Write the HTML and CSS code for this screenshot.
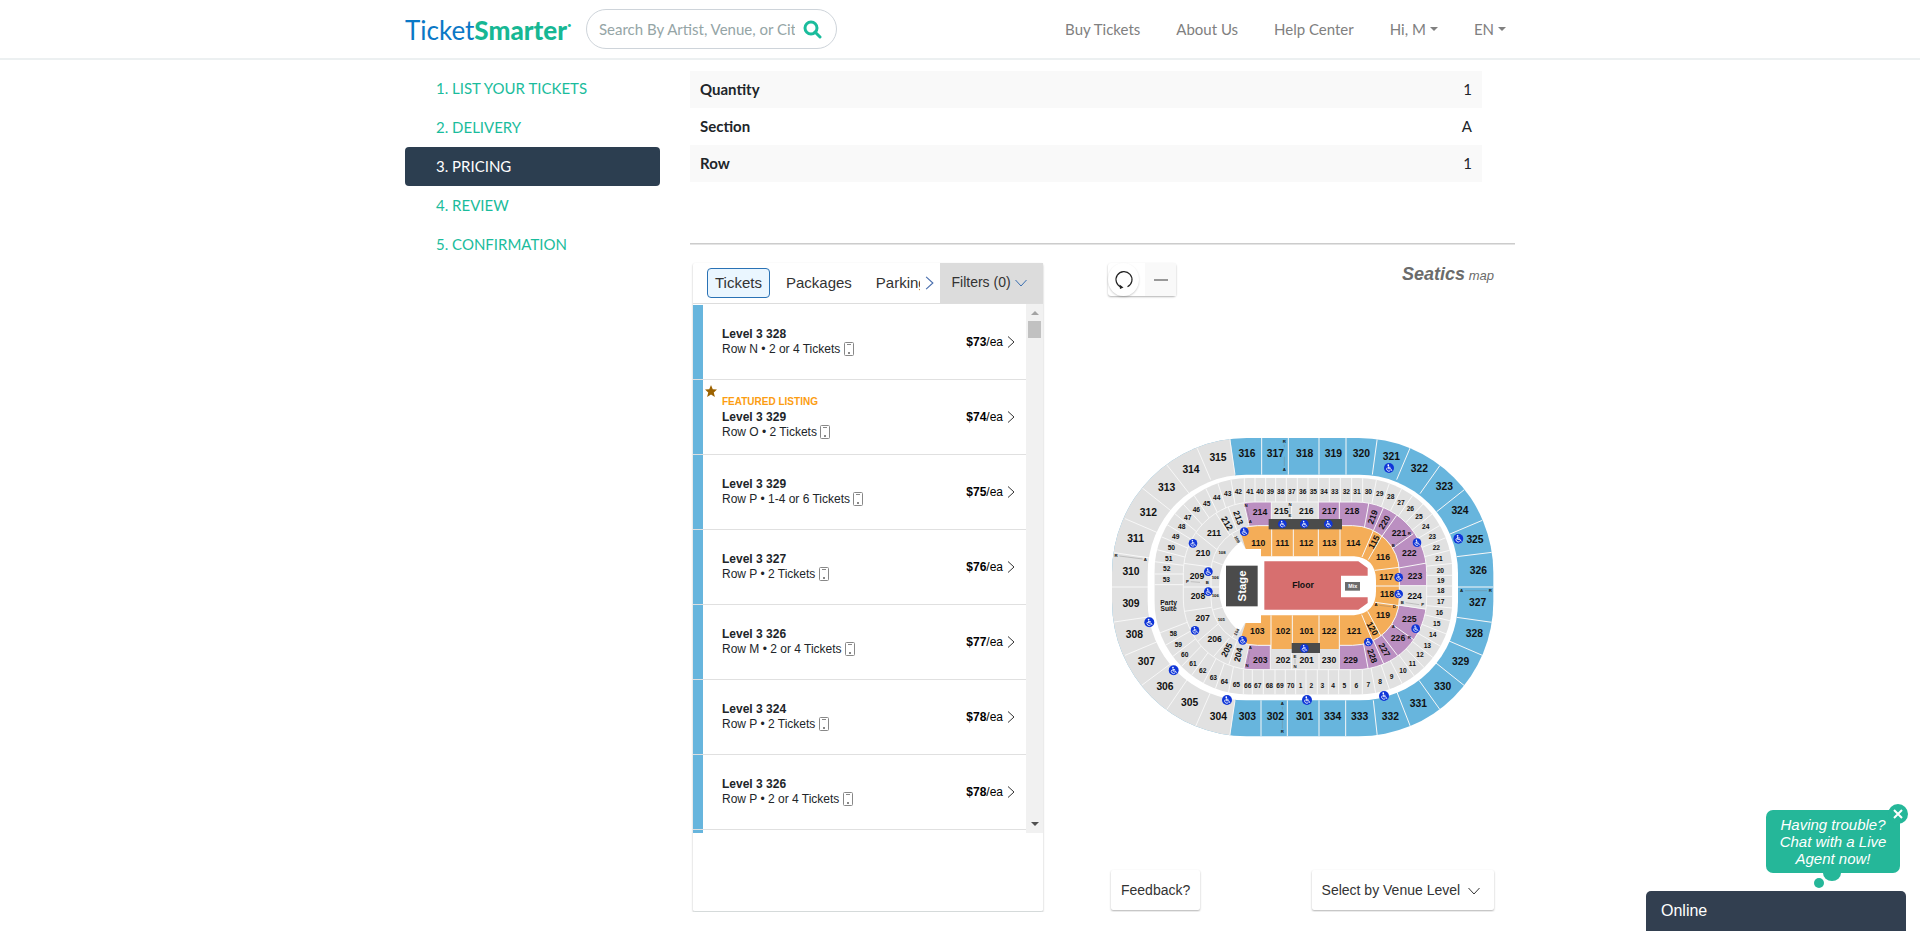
FILE: index.html
```html
<!DOCTYPE html>
<html lang="en">

<head>
  <meta charset="UTF-8" />
  <meta name="viewport" content="width=device-width, initial-scale=1.0" />
  <title>TicketSmarter</title>
  <link rel="stylesheet" href="styles.css">
</head>

<body>
  <svg class="sprite" width="0" height="0" aria-hidden="true">
    <symbol id="phone" viewBox="0 0 10 14">
      <rect x="0.5" y="0.5" width="9" height="13" rx="1" fill="none" stroke="#888" />
      <path d="M3 2.5h4" stroke="#888" />
      <rect x="4" y="10" width="2" height="2" fill="#888" />
    </symbol>
    <symbol id="chevron" viewBox="0 0 8 12">
      <path d="M1 0.5L7 6L1 11.5" fill="none" stroke="currentColor" />
    </symbol>
    <symbol id="chevron-down" viewBox="0 0 12 8">
      <path d="M0.5 1L6 7L11.5 1" fill="none" stroke="currentColor" />
    </symbol>
    <symbol id="wc" viewBox="-15 -15 30 30">
      <circle r="14" fill="#0f35d8" />
      <circle cx="-2" cy="-8" r="2.4" fill="#fff" />
      <path d="M-2-5V2H5L8 8M-2-2H4M-5-1A6 6 0 1 0 4 7" fill="none" stroke="#fff" stroke-width="2.4" />
    </symbol>
  </svg>

  <header class="site-header">
    <div class="container header-inner">
      <a href="#" class="logo"><span class="logo-ticket">Ticket</span><span class="logo-smarter">Smarter</span><span class="logo-reg">•</span></a>
      <form class="search">
        <input type="text" aria-label="Search" placeholder="Search By Artist, Venue, or City" />
        <button type="button" aria-label="Search">
          <svg width="19" height="19" viewBox="0 0 19 19"><circle cx="8" cy="8" r="6" fill="none" stroke="#1abc9c" stroke-width="3" /><path d="M12 12L17 17" stroke="#1abc9c" stroke-width="3" stroke-linecap="round" /></svg>
        </button>
      </form>
      <nav class="main-nav">
        <a href="#">Buy Tickets</a>
        <a href="#">About Us</a>
        <a href="#">Help Center</a>
        <a href="#" class="dropdown">Hi, M</a>
        <a href="#" class="dropdown">EN</a>
      </nav>
    </div>
  </header>

  <main class="container page">
    <nav class="steps">
      <a href="#">1. LIST YOUR TICKETS</a>
      <a href="#">2. DELIVERY</a>
      <a href="#" class="active">3. PRICING</a>
      <a href="#">4. REVIEW</a>
      <a href="#">5. CONFIRMATION</a>
    </nav>

    <section class="content">
      <table class="summary">
        <tr><th scope="row">Quantity</th><td>1</td></tr>
        <tr><th scope="row">Section</th><td>A</td></tr>
        <tr><th scope="row">Row</th><td>1</td></tr>
      </table>
      <hr />

      <div class="pricing">
        <div class="listings">
          <div class="listing-head">
            <div class="tabs">
              <button type="button" class="tab active">Tickets</button>
              <button type="button" class="tab">Packages</button>
              <button type="button" class="tab">Parking</button>
            </div>
            <button type="button" class="tabs-next" aria-label="More"><svg width="9" height="14"><use href="#chevron" /></svg></button>
            <button type="button" class="filters">Filters (0) <svg width="12" height="8"><use href="#chevron-down" /></svg></button>
          </div>

          <div class="listing-body">
            <ul class="listing-rows">
              <li>
                <div class="seat"><strong>Level 3 328</strong><span>Row N • 2 or 4 Tickets <svg width="10" height="14"><use href="#phone" /></svg></span></div>
                <div class="price"><span><b>$73</b>/ea</span><svg width="8" height="12"><use href="#chevron" /></svg></div>
              </li>
              <li>
                <svg class="star" width="12" height="12" viewBox="0 0 24 24"><path d="M12 0L15.5 8.5L24 9L17.5 15L19.8 24L12 19L4.2 24L6.5 15L0 9L8.5 8.5Z" fill="#9c6200" /></svg>
                <div class="seat"><em>FEATURED LISTING</em><strong>Level 3 329</strong><span>Row O • 2 Tickets <svg width="10" height="14"><use href="#phone" /></svg></span></div>
                <div class="price"><span><b>$74</b>/ea</span><svg width="8" height="12"><use href="#chevron" /></svg></div>
              </li>
              <li>
                <div class="seat"><strong>Level 3 329</strong><span>Row P • 1-4 or 6 Tickets <svg width="10" height="14"><use href="#phone" /></svg></span></div>
                <div class="price"><span><b>$75</b>/ea</span><svg width="8" height="12"><use href="#chevron" /></svg></div>
              </li>
              <li>
                <div class="seat"><strong>Level 3 327</strong><span>Row P • 2 Tickets <svg width="10" height="14"><use href="#phone" /></svg></span></div>
                <div class="price"><span><b>$76</b>/ea</span><svg width="8" height="12"><use href="#chevron" /></svg></div>
              </li>
              <li>
                <div class="seat"><strong>Level 3 326</strong><span>Row M • 2 or 4 Tickets <svg width="10" height="14"><use href="#phone" /></svg></span></div>
                <div class="price"><span><b>$77</b>/ea</span><svg width="8" height="12"><use href="#chevron" /></svg></div>
              </li>
              <li>
                <div class="seat"><strong>Level 3 324</strong><span>Row P • 2 Tickets <svg width="10" height="14"><use href="#phone" /></svg></span></div>
                <div class="price"><span><b>$78</b>/ea</span><svg width="8" height="12"><use href="#chevron" /></svg></div>
              </li>
              <li>
                <div class="seat"><strong>Level 3 326</strong><span>Row P • 2 or 4 Tickets <svg width="10" height="14"><use href="#phone" /></svg></span></div>
                <div class="price"><span><b>$78</b>/ea</span><svg width="8" height="12"><use href="#chevron" /></svg></div>
              </li>
              <li></li>
            </ul>
            <div class="scrollbar">
              <i class="arrow-up"></i>
              <i class="thumb"></i>
              <i class="arrow-down"></i>
            </div>
          </div>
        </div>

        <div class="map">
          <div class="map-top">
            <div class="zoom">
              <button type="button" class="reset" aria-label="Reset map">
                <svg width="20" height="20" viewBox="0 0 20 20"><path d="M13.5 16.8A8 8 0 1 0 7.5 17.2" fill="none" stroke="#222" stroke-width="1.2" /><path d="M5.5 14.5L9.5 17.5L6 19Z" fill="#222" /></svg>
              </button>
              <button type="button" class="minus" aria-label="Zoom out"><svg width="14" height="2"><rect width="14" height="2" fill="#999" /></svg></button>
            </div>
            <div class="seatics"><b>Seatics</b> map</div>
          </div>

          <svg class="arena" viewBox="24 13 1158 924" role="img" aria-label="Venue seating map">
            <defs>
              <clipPath id="c300"><rect x="36" y="40" width="1144" height="895" rx="404" /></clipPath>
              <clipPath id="cSuites"><rect x="163" y="160" width="894" height="650" rx="283" /></clipPath>
              <clipPath id="c200"><rect x="250" y="232" width="730" height="503" rx="212" /></clipPath>
              <clipPath id="c100"><rect x="333" y="303" width="565" height="359" rx="140" /></clipPath>
            </defs>

            <!-- 300 level -->
            <g clip-path="url(#c300)">
              <rect class="blue" x="30" y="30" width="1160" height="910" />
              <path class="grey" d="M30 30H389L405 150V827L389 940H30Z" />
              <path class="sep" d="M389 40L405 150M485 40V150M565 40V150M657 40V150M738 40V150M832 40L817 150M389 935L405 827M483 827V935M562 827V935M657 827V935M737 827V935M832 935L820 827M290 67L332 165M200 120L268 207M127 190L215 260M75 282L175 325M43 384L150 400M36 487H150M42 592L145 577M75 692L170 652M125 782L215 715M200 855L265 760M287 905L335 795M931 68L890 165M1020 122L960 207M1093 195L1010 261M1147 287L1050 328M1176 383L1070 396M1180 487H1070M1176 593L1070 578M1147 692L1045 648M1092 782L1008 715M1020 855L957 767M931 905L890 800" />
            </g>
            <rect class="white" x="143" y="150" width="931" height="677" rx="296" />

            <!-- suites -->
            <g clip-path="url(#cSuites)">
              <rect class="grey" x="163" y="160" width="894" height="650" />
              <path class="sep" d="M433 160V232M465 160V232M497 160V232M527 160V232M559 160V232M592 160V232M624 160V232M656 160V232M688 160V232M721 160V232M755 160V232M788 160V232M440 446L383 106M440 446L336 120M440 446L293 141M440 446L250 165M440 446L210 195M440 446L180 230M440 446L154 271M440 446L132 314M440 446L118 361M440 446L108 404M163 448H260M163 480H260M440 524L140 640M440 524L143 692M440 524L167 735M440 524L196 775M440 524L234 808M440 524L278 838M440 524L322 861M440 524L371 877M430 735V810M457 735V810M490 735V810M525 735V810M556 735V810M587 735V810M618 735V810M652 735V810M685 735V810M716 735V810M751 735V810M787 735V810M776 524L840 877M776 524L891 860M776 524L938 838M776 524L982 808M776 524L1018 776M776 524L1049 738M776 524L1076 696M776 524L1095 650M776 524L1109 602M776 524L1110 555M970 515H1060M970 484H1060M970 452H1060M776 446L1116 410M776 446L1108 362M776 446L1094 316M776 446L1071 272M776 446L1043 230M776 446L1011 193M776 446L973 162M776 446L933 137M776 446L888 118M776 446L840 109" />
            </g>

            <!-- 200 level -->
            <g clip-path="url(#c200)">
              <rect class="grey" x="250" y="232" width="730" height="503" />
              <path class="purple" d="M431 232H514V303H447ZM655 232H1000V483H700V303H655ZM880 541L990 556V740H718V600ZM447 662H511V735H431Z" />
              <path class="sep" d="M431 232L447 303M514 232V303M575 232V303M655 232V303M718 232V303M807 232L792 315M853 243L817 325M890 272L842 340M940 327L878 371M980 415L890 431M890 483H980M980 554L890 540M948 650L875 598M893 693L843 628M853 722L818 643M805 735L790 655M511 662V735M575 662V735M657 662V735M718 662V735M431 735L447 662M382 240L410 315M345 262L395 340M283 320L355 378M250 416L340 428M250 487H340M253 560L340 547M288 655L358 595M333 705L388 640M383 730L410 650" />
            </g>
            <rect class="frame" x="250" y="232" width="730" height="503" rx="212" />

            <!-- 100 level -->
            <g clip-path="url(#c100)">
              <rect class="grey" x="333" y="303" width="565" height="359" />
              <path class="orange" d="M416 303H900V662H416L437 595V373Z" />
              <path class="sep" d="M515 303V395M580 303V395M655 303V395M720 303V395M820 318L786 397M848 330L805 405M898 428L825 437M825 484H898M898 543L825 533M844 636L803 560M820 654L785 570M390 320L420 365M340 410L380 425M333 487H360M340 555L380 545M390 645L425 600" />
            </g>
            <rect class="frame" x="333" y="303" width="565" height="359" rx="140" />
            <rect class="orange" x="513" y="600" width="205" height="73" />
            <path class="sep" d="M513 572V673M577 572V673M657 572V673M718 572V673" />
            <path class="white" d="M483 395V373H437L424 350Q357 400 357 485Q357 570 420 622L435 595H483V572H762Q828 565 828 500V467Q828 400 762 395Z" />

            <rect class="dark" x="506" y="283" width="220" height="31" />
            <rect class="dark" x="575" y="655" width="85" height="30" />
            <rect class="dark" x="378" y="423" width="95" height="122" />
            <path class="red" d="M493 410H775L803 430V453H723V518H803V535L775 555H493Z" />
            <rect class="mix" x="735" y="472" width="45" height="26" />

            <g class="t300">
              <text x="354" y="98">315</text><text x="273" y="136">314</text><text x="200" y="189">313</text><text x="145" y="263">312</text><text x="107" y="343">311</text><text x="93" y="441">310</text>
              <text x="93" y="538">309</text><text x="103" y="630">308</text><text x="139" y="712">307</text><text x="195" y="785">306</text><text x="269" y="834">305</text><text x="355" y="875">304</text>
              <text x="442" y="875">303</text><text x="526" y="875">302</text><text x="614" y="875">301</text><text x="698" y="875">334</text><text x="779" y="875">333</text><text x="871" y="875">332</text>
              <text x="955" y="838">331</text><text x="1028" y="785">330</text><text x="1082" y="710">329</text><text x="1123" y="627">328</text><text x="1133" y="535">327</text><text x="1135" y="438">326</text>
              <text x="1125" y="344">325</text><text x="1080" y="257">324</text><text x="1033" y="187">323</text><text x="958" y="132">322</text><text x="874" y="97">321</text><text x="784" y="87">320</text>
              <text x="700" y="87">319</text><text x="614" y="87">318</text><text x="526" y="87">317</text><text x="441" y="87">316</text>
            </g>
            <g class="t200">
              <text x="480" y="262">214</text><text x="544" y="258">215</text><text x="619" y="258">216</text><text x="688" y="258">217</text><text x="756" y="258">218</text>
              <text transform="translate(818 277) rotate(-70)">219</text><text transform="translate(853 293) rotate(-60)">220</text>
              <text x="897" y="325">221</text><text x="928" y="386">222</text><text x="945" y="454">223</text><text x="944" y="513">224</text><text x="928" y="582">225</text><text x="894" y="641">226</text>
              <text transform="translate(853 676) rotate(60)">227</text><text transform="translate(817 694) rotate(70)">228</text>
              <text x="752" y="707">229</text><text x="687" y="707">230</text><text x="620" y="707">201</text><text x="549" y="707">202</text><text x="481" y="707">203</text>
              <text transform="translate(415 690) rotate(-78)">204</text><text transform="translate(380 676) rotate(-62)">205</text>
              <text x="344" y="642">206</text><text x="308" y="581">207</text><text x="294" y="515">208</text><text x="291" y="454">209</text><text x="309" y="386">210</text><text x="342" y="325">211</text>
              <text transform="translate(381 296) rotate(58)">212</text><text transform="translate(415 279) rotate(70)">213</text>
              <text x="475" y="354">110</text><text x="547" y="354">111</text><text x="619" y="354">112</text><text x="688" y="354">113</text><text x="760" y="354">114</text>
              <text transform="translate(822 352) rotate(-62)">115</text><text x="849" y="398">116</text><text x="859" y="458">117</text><text x="861" y="509">118</text><text x="849" y="570">119</text>
              <text transform="translate(817 612) rotate(60)">120</text><text x="762" y="618">121</text><text x="687" y="618">122</text><text x="620" y="618">101</text><text x="549" y="618">102</text><text x="472" y="618">103</text>
              <text x="609" y="482">Floor</text>
            </g>
            <g class="suites">
              <text x="415" y="200">42</text><text x="450" y="200">41</text><text x="480" y="200">40</text><text x="511" y="200">39</text><text x="542" y="200">38</text><text x="575" y="200">37</text><text x="608" y="200">36</text><text x="640" y="200">35</text><text x="672" y="200">34</text><text x="704" y="200">33</text><text x="739" y="200">32</text><text x="771" y="200">31</text>
              <text x="805" y="202">30</text><text x="839" y="208">29</text><text x="872" y="217">28</text><text x="903" y="234">27</text><text x="931" y="253">26</text><text x="957" y="277">25</text><text x="977" y="307">24</text><text x="997" y="337">23</text><text x="1009" y="369">22</text><text x="1017" y="403">21</text><text x="1021" y="437">20</text><text x="1022" y="468">19</text>
              <text x="1022" y="499">18</text><text x="1022" y="532">17</text><text x="1018" y="563">16</text><text x="1010" y="598">15</text><text x="998" y="630">14</text><text x="982" y="663">13</text><text x="960" y="691">12</text><text x="937" y="716">11</text><text x="909" y="738">10</text><text x="875" y="757">9</text><text x="840" y="770">8</text><text x="805" y="781">7</text>
              <text x="769" y="782">6</text><text x="733" y="782">5</text><text x="699" y="782">4</text><text x="667" y="782">3</text><text x="634" y="782">2</text><text x="602" y="782">1</text><text x="572" y="782">70</text><text x="540" y="782">69</text><text x="508" y="782">68</text><text x="473" y="782">67</text><text x="443" y="782">66</text><text x="409" y="779">65</text>
              <text x="373" y="772">64</text><text x="340" y="758">63</text><text x="308" y="737">62</text><text x="279" y="717">61</text><text x="254" y="690">60</text><text x="235" y="660">59</text><text x="220" y="628">58</text><text x="206" y="533">Party</text><text x="206" y="552">Suite</text>
              <text x="199" y="464">53</text><text x="200" y="432">52</text><text x="206" y="401">51</text><text x="214" y="369">50</text><text x="227" y="336">49</text><text x="245" y="306">48</text><text x="263" y="279">47</text><text x="289" y="255">46</text><text x="320" y="236">45</text><text x="350" y="220">44</text><text x="383" y="207">43</text>
            </g>
            <g class="tiny">
              <text transform="translate(411 344) rotate(60)">109</text><text x="366" y="384">108</text><text x="346" y="458">106</text><text x="346" y="513">106</text><text x="364" y="584">105</text><text transform="translate(410 622) rotate(-60)">104</text>
              <text x="553" y="50">R</text><text x="553" y="134">A</text><text x="547" y="836">A</text><text x="547" y="922">R</text><text x="48" y="393">R</text><text x="136" y="404">A</text><text x="1085" y="498">A</text><text x="1171" y="498">R</text>
              <text x="438" y="243">N</text><text x="451" y="291">A</text><text x="570" y="239">N</text><text x="570" y="273">E</text><text x="262" y="470">P</text><text x="322" y="474">B</text><text x="907" y="533">B</text><text x="968" y="541">P</text>
              <text x="828" y="541">A</text><text x="883" y="547">D</text><text x="928" y="327">R</text><text x="880" y="363">B</text><text x="880" y="607">A</text><text x="928" y="640">R</text><text x="451" y="670">A</text><text x="441" y="724">N</text><text x="585" y="695">E</text><text x="585" y="725">N</text>
            </g>
            <path class="ticks" d="M553 60V68M553 96V124M547 846V854M547 886V912M58 394L128 403M1095 498H1161M441 252L449 283M570 247V265M272 471L300 473M917 534L958 540M838 542L873 546M919 333L888 357M889 612L920 635M449 680L443 714M585 703V717" />
            <text class="stage" transform="translate(426 484) rotate(-90)">Stage</text>
            <text class="mix-label" x="758" y="485">Mix</text>

            <g>
              <use href="#wc" x="533" y="284" width="28" height="28" /><use href="#wc" x="599" y="284" width="28" height="28" /><use href="#wc" x="671" y="284" width="28" height="28" />
              <use href="#wc" x="419" y="307" width="28" height="28" /><use href="#wc" x="265" y="342" width="28" height="28" /><use href="#wc" x="311" y="427" width="28" height="28" />
              <use href="#wc" x="311" y="487" width="28" height="28" /><use href="#wc" x="271" y="603" width="28" height="28" /><use href="#wc" x="414" y="633" width="28" height="28" />
              <use href="#wc" x="599" y="657" width="28" height="28" /><use href="#wc" x="791" y="638" width="28" height="28" /><use href="#wc" x="933" y="598" width="28" height="28" />
              <use href="#wc" x="882" y="494" width="28" height="28" /><use href="#wc" x="882" y="444" width="28" height="28" /><use href="#wc" x="937" y="340" width="28" height="28" />
              <use href="#wc" x="132" y="577" width="32" height="32" /><use href="#wc" x="205" y="721" width="32" height="32" /><use href="#wc" x="365" y="810" width="32" height="32" />
              <use href="#wc" x="605" y="810" width="32" height="32" /><use href="#wc" x="836" y="798" width="32" height="32" /><use href="#wc" x="851" y="114" width="32" height="32" /><use href="#wc" x="1059" y="326" width="32" height="32" />
            </g>
          </svg>

          <div class="map-bottom">
            <button type="button" class="card-btn">Feedback?</button>
            <button type="button" class="card-btn level-btn">Select by Venue Level <svg width="12" height="8"><use href="#chevron-down" /></svg></button>
          </div>
        </div>
      </div>
    </section>
  </main>

  <div class="chat">
    <div class="chat-bubble">
      Having trouble? Chat with a Live Agent now!
      <button type="button" class="chat-close" aria-label="Close"><svg width="10" height="10" viewBox="0 0 10 10"><path d="M1 1L9 9M9 1L1 9" stroke="#fff" stroke-width="2" /></svg></button>
    </div>
    <svg class="chat-tail" width="30" height="16" viewBox="0 0 30 16"><path d="M10 0H28A9 8 0 0 1 10 0Z" fill="#25b799" /><circle cx="6" cy="10" r="5" fill="#25b799" /></svg>
    <button type="button" class="chat-bar">Online</button>
  </div>
</body>

</html>
```
FILE: styles.css
```css
* {
  margin: 0;
  padding: 0;
  box-sizing: border-box;
}

body {
  background-color: #fff;
  color: #212529;
  font-family: Lato, sans-serif;
  font-size: 15px;
}

a {
  color: #1abc9c;
  text-decoration: none;
}

button {
  border: none;
  background: none;
  font-family: "Liberation Sans", Arial, sans-serif;
  color: #333;
  cursor: pointer;
}

.sprite {
  position: absolute;
}

.container {
  max-width: 1140px;
  margin: 0 auto;
  padding: 0 15px;
}

/* Header */
.site-header {
  border-bottom: 2px solid #ecf0f1;
}

.header-inner {
  display: flex;
  align-items: center;
  height: 58px;
}

.logo {
  display: flex;
  width: 181px;
  padding-top: 2px;
  font-size: 26px;
  line-height: 32px;
}

.logo-ticket {
  color: #0a78c6;
}

.logo-smarter {
  color: #17b794;
  font-weight: 900;
}

.logo-reg {
  font-size: 8px;
  line-height: 22px;
}

.search {
  display: flex;
  align-items: center;
  width: 251px;
  height: 40px;
  padding: 0 14px 0 12px;
  border: 1px solid #ced4da;
  border-radius: 20px;
}

.search input {
  flex: 1;
  min-width: 0;
  margin-right: 8px;
  border: none;
  outline: none;
  font-family: Lato, sans-serif;
  font-size: 15px;
}

.search input::placeholder {
  color: #95a5a6;
}

.search button {
  display: flex;
}

.main-nav {
  display: flex;
  gap: 36px;
  margin-left: auto;
  padding-right: 9px;
}

.main-nav a {
  color: #808080;
}

.dropdown::after {
  content: "";
  display: inline-block;
  margin-left: 4px;
  vertical-align: 4px;
  border-top: 4px solid;
  border-left: 4px solid transparent;
  border-right: 4px solid transparent;
}

/* Page */
.page {
  display: grid;
  grid-template-columns: 255px minmax(0, 1fr);
  gap: 30px;
  padding-top: 11px;
}

.steps {
  margin-top: -2px;
}

.steps a {
  display: block;
  padding-left: 31px;
  line-height: 39px;
  border-radius: 4px;
}

.steps .active {
  background-color: #2c3e50;
  color: #fff;
}

.summary {
  width: 96%;
  border-collapse: collapse;
}

.summary th,
.summary td {
  height: 37px;
  padding: 0 10px 2px;
}

.summary th {
  text-align: left;
  font-weight: bold;
}

.summary td {
  text-align: right;
}

.summary tr:nth-child(odd) {
  background-color: #f9f9f9;
}

hr {
  margin: 61px 0 18px;
  border: none;
  border-top: 1px solid #ccc;
  border-bottom: 1px solid #e4e4e4;
}

.pricing {
  display: grid;
  grid-template-columns: 350px minmax(0, 1fr);
  gap: 65px;
  padding: 0 21px 0 3px;
  font-family: "Liberation Sans", Arial, sans-serif;
}

/* Listings */
.listings {
  height: 649px;
  border-radius: 2px;
  border-bottom: 1px solid #d5dada;
  box-shadow: 0 1px 2px rgba(0, 0, 0, 0.3);
}

.listing-head {
  display: flex;
  height: 41px;
  border-bottom: 1px solid #ddd;
}

.tabs {
  display: flex;
  flex: 1;
  align-items: center;
  gap: 8px;
  min-width: 0;
  padding-left: 14px;
  overflow: hidden;
}

.tab {
  height: 30px;
  padding: 0 7px 2px;
  border: 1px solid transparent;
  border-radius: 4px;
  font-size: 15px;
}

.tab.active {
  background-color: #eaf6ff;
  border-color: #2a72b5;
}

.tabs-next {
  display: flex;
  align-items: center;
  width: 20px;
  padding-left: 5px;
  color: #4a6fae;
}

.filters {
  width: 103px;
  height: 40px;
  padding: 0 5px 2px 0;
  background-color: #dcdcdc;
  font-size: 14px;
}

.filters svg {
  color: #3a6fb0;
}

.listing-body {
  display: flex;
  height: 529px;
}

.listing-rows {
  flex: 1;
  overflow: hidden;
  border-top: 1px solid #fff;
  list-style: none;
}

.listing-rows li {
  position: relative;
  display: flex;
  align-items: center;
  height: 75px;
  padding: 0 11px 0 29px;
  background: linear-gradient(to right, #67b5dd 10px, #fff 10px);
  border-bottom: 1px solid #e0e0e0;
}

.seat {
  flex: 1;
  font-size: 12px;
  line-height: 15px;
}

.seat em,
.seat strong,
.seat span {
  display: block;
}

.seat em {
  margin-bottom: 2px;
  color: #fc9d12;
  font-size: 10px;
  font-style: normal;
  font-weight: bold;
  line-height: 13px;
}

.seat svg {
  vertical-align: -3px;
}

.star {
  position: absolute;
  top: 5px;
  left: 12px;
}

.price {
  display: flex;
  align-items: center;
  gap: 4px;
  color: #000;
  font-size: 12px;
}

.price svg {
  color: #333;
}

.scrollbar {
  display: flex;
  flex-direction: column;
  align-items: center;
  width: 17px;
  padding: 7px 0;
  background-color: #f1f1f1;
}

.scrollbar .arrow-up {
  border: 4px solid transparent;
  border-top: none;
  border-bottom-color: #a3a3a3;
}

.scrollbar .thumb {
  width: 13px;
  height: 17px;
  margin-top: 6px;
  background-color: #c1c1c1;
}

.scrollbar .arrow-down {
  margin-top: auto;
  border: 4px solid transparent;
  border-bottom: none;
  border-top-color: #505050;
}

/* Map */
.map {
  display: flex;
  flex-direction: column;
  justify-content: space-between;
  height: 647px;
}

.map-top {
  display: flex;
  justify-content: space-between;
}

.zoom {
  display: flex;
  height: 33px;
  border-radius: 3px;
  box-shadow: 0 1px 2px rgba(0, 0, 0, 0.3);
}

.zoom button {
  display: flex;
  align-items: center;
  justify-content: center;
  width: 31px;
}

.zoom .reset {
  margin-right: 6px;
  border-radius: 50%;
  box-shadow: 0 1px 2px rgba(0, 0, 0, 0.2);
}

.zoom .minus {
  background-color: #f9f9f9;
}

.seatics {
  color: #6b6b6b;
  font-size: 13px;
  font-style: italic;
  line-height: 22px;
}

.seatics b {
  font-size: 18px;
}

.map-bottom {
  display: flex;
  justify-content: space-between;
  padding-left: 3px;
}

.card-btn {
  height: 40px;
  padding: 0 10px;
  border-radius: 2px;
  box-shadow: 0 1px 2px rgba(0, 0, 0, 0.3);
  font-size: 14px;
}

.level-btn {
  padding-right: 14px;
}

.level-btn svg {
  margin-left: 4px;
}

.arena {
  width: 100%;
}

.blue { fill: #67b5dd; }
.grey { fill: #e1e1e1; }
.purple { fill: #bb8fc1; }
.orange { fill: #f4ad58; }
.red { fill: #d76f6f; }
.dark { fill: #4b4b4b; }
.mix { fill: #6b6b6b; }
.white { fill: #fff; }

.sep,
.frame {
  fill: none;
  stroke: #f7f7f7;
  stroke-width: 3;
}

.ticks {
  fill: none;
  stroke: #777;
  stroke-width: 1;
}

.arena text {
  fill: #111;
  font-weight: bold;
  text-anchor: middle;
  dominant-baseline: central;
}

.t300 { font-size: 31px; }
.t200 { font-size: 26px; }
.suites { font-size: 20px; }
.tiny { font-size: 13px; }

.arena .stage {
  fill: #fff;
  font-size: 34px;
}

.arena .mix-label {
  fill: #fff;
  font-size: 16px;
}

/* Chat */
.chat {
  position: fixed;
  right: 14px;
  bottom: 0;
  display: flex;
  flex-direction: column;
  align-items: flex-end;
  width: 260px;
}

.chat-bubble {
  position: relative;
  width: 134px;
  margin-right: 6px;
  padding: 6px 12px;
  background-color: #25b799;
  border-radius: 7px;
  color: #fff;
  font: italic 15px/17px "Liberation Sans", Arial, sans-serif;
  text-align: center;
}

.chat-close {
  position: absolute;
  top: -6px;
  right: -8px;
  display: flex;
  align-items: center;
  justify-content: center;
  width: 20px;
  height: 20px;
  border-radius: 50%;
  background-color: #25b799;
}

.chat-tail {
  margin: 0 63px 2px 0;
}

.chat-bar {
  width: 100%;
  height: 40px;
  padding-left: 15px;
  border-radius: 5px 5px 0 0;
  background-color: #323f50;
  color: #fff;
  font-size: 16px;
  text-align: left;
}
```
